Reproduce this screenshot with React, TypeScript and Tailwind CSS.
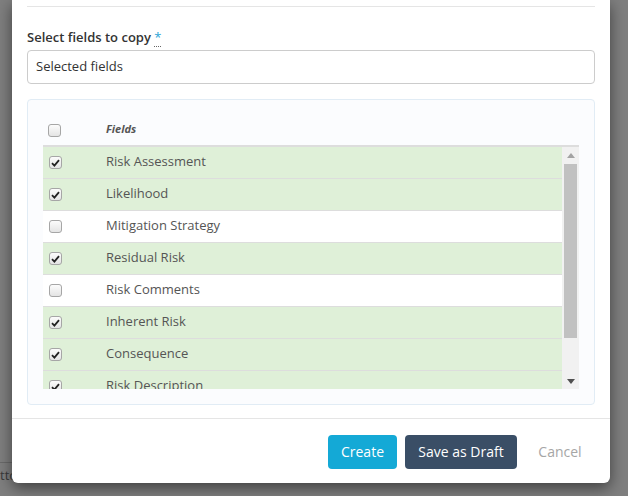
import type { ReactNode } from "react";

type Field = { name: string; checked: boolean };

const FIELDS: Field[] = [
  { name: "Risk Assessment", checked: true },
  { name: "Likelihood", checked: true },
  { name: "Mitigation Strategy", checked: false },
  { name: "Residual Risk", checked: true },
  { name: "Risk Comments", checked: false },
  { name: "Inherent Risk", checked: true },
  { name: "Consequence", checked: true },
  { name: "Risk Description", checked: true },
  { name: "Risk Owner", checked: false },
];

function Check({ on }: { on: boolean }) {
  return (
    <span className="flex h-[13px] w-[13px] items-center justify-center rounded-[3px] border border-[#a6a6a6] bg-gradient-to-b from-[#fcfcfc] to-[#e4e4e4]">
      {on ? (
        <svg width="9" height="8" viewBox="0 0 9 8">
          <path d="M1 4.2 L3.4 6.6 L8 1.2" fill="none" stroke="#222" strokeWidth="1.8" />
        </svg>
      ) : null}
    </span>
  );
}

function Btn({ className, children }: { className: string; children: ReactNode }) {
  return (
    <button
      type="button"
      className={`h-[34px] rounded-[4px] text-[14px] leading-[34px] ${className}`}
    >
      {children}
    </button>
  );
}

export default function App() {
  return (
    <div
      className="relative h-[496px] w-[628px] overflow-hidden bg-[#7f7f7f]"
      style={{ fontFamily: '"Open Sans", "Liberation Sans", sans-serif' }}
    >
      {/* page underneath the backdrop */}
      <div className="absolute left-0 top-[462px] h-px w-[40px] bg-[#6a6a6a]" />
      <div className="absolute left-0 top-[466px] text-[13px] text-[#3a3a3a]">tto</div>

      <div className="relative ml-[12px] flex h-[483px] w-[598px] flex-col rounded-b-[6px] bg-white shadow-[0_5px_15px_rgba(0,0,0,0.5)]">
        <div className="mx-[15px] h-[7px] border-b border-[#e5e5e5]" />

        <div className="flex-1 px-[15px] pt-[21px]">
          <label className="mb-[4px] block text-[13px] font-semibold leading-[18px] text-[#333]">
            Select fields to copy{" "}
            <abbr className="font-normal text-[#29a3d6] no-underline [border-bottom:1px_dotted_#666]" title="required">
              *
            </abbr>
          </label>
          <div className="flex h-[34px] items-center rounded-[4px] border border-[#ccc] px-[8px] text-[13px] text-[#333]">
            Selected fields
          </div>

          <div className="mt-[15px] h-[306px] rounded-[4px] border border-[#e1ecf5] bg-[#fbfcfe] px-[15px] pb-[15px]">
            <div className="flex h-[45px] items-end pb-[8px]">
              <div className="flex w-[63px] items-center pl-[5px]">
                <Check on={false} />
              </div>
              <span className="-mt-[2px] text-[11px] font-bold italic text-[#555]">Fields</span>
            </div>
            <div className="flex h-[244px] border-t-2 border-[#ddd]">
              <div className="flex-1 overflow-hidden">
                {FIELDS.map((f) => (
                  <div
                    key={f.name}
                    className={`flex h-[32px] items-center border-b border-[#ddd] pb-[1px] ${f.checked ? "bg-[#dff0d8]" : "bg-white"}`}
                  >
                    <div className="flex w-[63px] items-center pl-[6px] pt-[1px]">
                      <Check on={f.checked} />
                    </div>
                    <span className="text-[13px] text-[#555]">{f.name}</span>
                  </div>
                ))}
              </div>
              <div className="flex w-[17px] flex-col items-center bg-[#f1f1f1]">
                <div className="flex h-[17px] items-center justify-center">
                  <svg width="8" height="5" viewBox="0 0 8 5">
                    <path d="M0 5 L4 0 L8 5 Z" fill="#a3a3a3" />
                  </svg>
                </div>
                <div className="h-[174px] w-[13px] bg-[#c1c1c1]" />
                <div className="flex flex-1 items-end justify-center pb-[5px]">
                  <svg width="8" height="5" viewBox="0 0 8 5">
                    <path d="M0 0 L8 0 L4 5 Z" fill="#505050" />
                  </svg>
                </div>
              </div>
            </div>
          </div>
        </div>

        <div className="flex items-center justify-end gap-[8px] border-t border-[#e5e5e5] px-[15px] pb-[14px] pt-[16px]">
          <Btn className="w-[69px] bg-[#14a9d6] text-white">Create</Btn>
          <Btn className="w-[112px] bg-[#3a4e66] text-white">Save as Draft</Btn>
          <Btn className="w-[70px] bg-transparent text-[#a6a6a6]">Cancel</Btn>
        </div>
      </div>
    </div>
  );
}
